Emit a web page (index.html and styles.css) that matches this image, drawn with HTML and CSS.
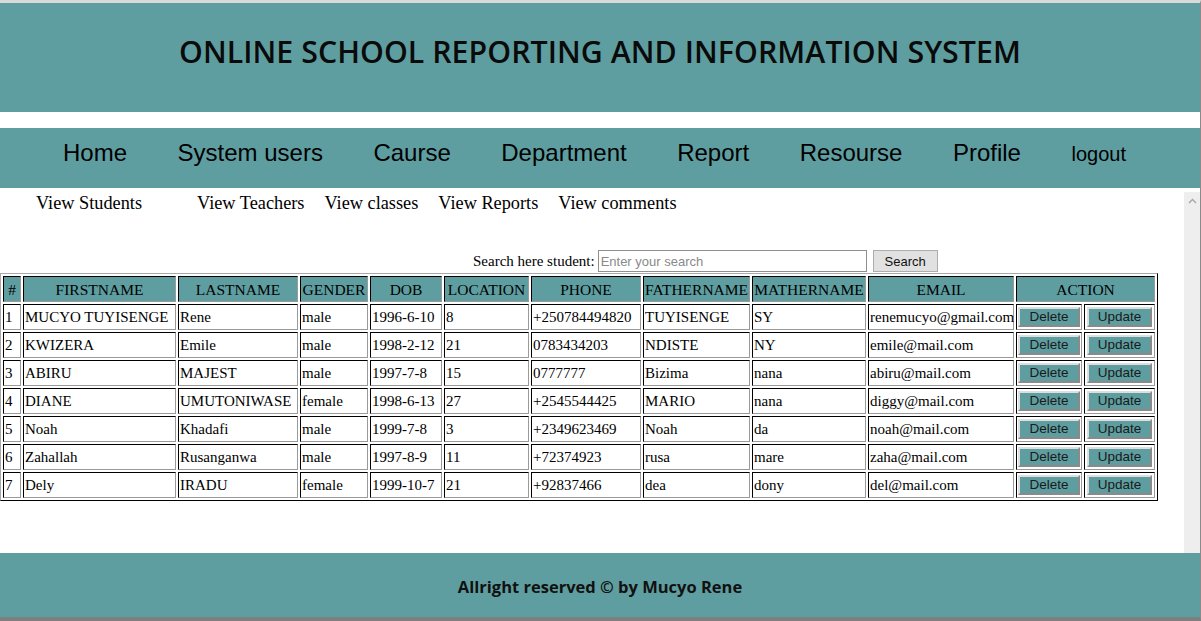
FILE: index.html
```html
<!DOCTYPE html>
<html lang="en">
<head>
<meta charset="utf-8">
<title>Online School Reporting and Information System</title>
<link rel="stylesheet" href="styles.css">
</head>
<body>
<div class="frame">
  <header class="masthead">
    <h1>ONLINE SCHOOL REPORTING AND INFORMATION SYSTEM</h1>
  </header>
  <nav class="topnav">
    <a href="#">Home</a>
    <a href="#">System users</a>
    <a href="#">Caurse</a>
    <a href="#">Department</a>
    <a href="#">Report</a>
    <a href="#">Resourse</a>
    <a href="#">Profile</a>
    <a href="#" class="logout">logout</a>
  </nav>
  <div class="content">
    <main class="main">
      <div class="subnav">
        <a href="#" class="first">View Students</a>
        <a href="#">View Teachers</a>
        <a href="#">View classes</a>
        <a href="#">View Reports</a>
        <a href="#">View comments</a>
      </div>
      <form class="search">
        <label for="q">Search here student:</label>
        <input id="q" type="text" placeholder="Enter your search">
        <button type="button">Search</button>
      </form>
      <table class="students">
        <colgroup>
          <col class="c-num"><col class="c-first"><col class="c-last"><col class="c-gender"><col class="c-dob"><col class="c-loc"><col class="c-phone"><col class="c-father"><col class="c-mother"><col class="c-email"><col class="c-del"><col class="c-upd">
        </colgroup>
        <thead>
          <tr><th>#</th><th>FIRSTNAME</th><th>LASTNAME</th><th>GENDER</th><th>DOB</th><th>LOCATION</th><th>PHONE</th><th>FATHERNAME</th><th>MATHERNAME</th><th>EMAIL</th><th colspan="2">ACTION</th></tr>
        </thead>
        <tbody>
          <tr><td>1</td><td>MUCYO TUYISENGE</td><td>Rene</td><td>male</td><td>1996-6-10</td><td>8</td><td>+250784494820</td><td>TUYISENGE</td><td>SY</td><td>renemucyo@gmail.com</td><td><button class="act">Delete</button></td><td><button class="act">Update</button></td></tr>
          <tr><td>2</td><td>KWIZERA</td><td>Emile</td><td>male</td><td>1998-2-12</td><td>21</td><td>0783434203</td><td>NDISTE</td><td>NY</td><td>emile@mail.com</td><td><button class="act">Delete</button></td><td><button class="act">Update</button></td></tr>
          <tr><td>3</td><td>ABIRU</td><td>MAJEST</td><td>male</td><td>1997-7-8</td><td>15</td><td>0777777</td><td>Bizima</td><td>nana</td><td>abiru@mail.com</td><td><button class="act">Delete</button></td><td><button class="act">Update</button></td></tr>
          <tr><td>4</td><td>DIANE</td><td>UMUTONIWASE</td><td>female</td><td>1998-6-13</td><td>27</td><td>+2545544425</td><td>MARIO</td><td>nana</td><td>diggy@mail.com</td><td><button class="act">Delete</button></td><td><button class="act">Update</button></td></tr>
          <tr><td>5</td><td>Noah</td><td>Khadafi</td><td>male</td><td>1999-7-8</td><td>3</td><td>+2349623469</td><td>Noah</td><td>da</td><td>noah@mail.com</td><td><button class="act">Delete</button></td><td><button class="act">Update</button></td></tr>
          <tr><td>6</td><td>Zahallah</td><td>Rusanganwa</td><td>male</td><td>1997-8-9</td><td>11</td><td>+72374923</td><td>rusa</td><td>mare</td><td>zaha@mail.com</td><td><button class="act">Delete</button></td><td><button class="act">Update</button></td></tr>
          <tr><td>7</td><td>Dely</td><td>IRADU</td><td>female</td><td>1999-10-7</td><td>21</td><td>+92837466</td><td>dea</td><td>dony</td><td>del@mail.com</td><td><button class="act">Delete</button></td><td><button class="act">Update</button></td></tr>
        </tbody>
      </table>
    </main>
    <div class="scrollbar" aria-hidden="true">
      <svg class="chev" width="9" height="6" viewBox="0 0 9 6"><path d="M1 5 L4.5 1.5 L8 5" fill="none" stroke="#a3a3a3" stroke-width="1.3"/></svg>
    </div>
  </div>
  <footer class="foot">Allright reserved © by Mucyo Rene</footer>
</div>
</body>
</html>
```

FILE: styles.css
```css
* { box-sizing: border-box; }
html, body { margin: 0; padding: 0; }
body {
  width: 1201px;
  height: 621px;
  overflow: hidden;
  background: #fff;
  color: #000;
  font-family: "Liberation Serif", "Times New Roman", serif;
}
a { color: inherit; text-decoration: none; }

.frame {
  height: 621px;
  display: flex;
  flex-direction: column;
  border-top: 3px solid #dadada;
  border-right: 1px solid #8a8a8a;
  border-bottom: 4px solid #7f7f7f;
}

.masthead {
  flex: none;
  height: 109px;
  background: #5f9ea0;
  display: flex;
  justify-content: center;
}
.masthead h1 {
  margin: 0;
  padding-top: 28px;
  font-family: "Open Sans", "Liberation Sans", sans-serif;
  font-weight: 600;
  font-size: 30.3px;
  line-height: 41px;
  letter-spacing: 0.05px;
  color: #0a0a0a;
  white-space: nowrap;
}

.topnav {
  flex: none;
  margin-top: 16px;
  height: 60px;
  background: #5f9ea0;
  display: flex;
  align-items: baseline;
  gap: 50.5px;
  padding: 11px 0 0 63px;
  font-family: "Liberation Sans", Arial, sans-serif;
  font-size: 24px;
  line-height: 28px;
}
.topnav .logout { font-size: 20px; }

.content {
  flex: none;
  height: 365px;
  display: flex;
}
.main { flex: 1; min-width: 0; }
.scrollbar {
  flex: none;
  width: 16px;
  margin-top: 4px;
  background: #eeeeee;
  display: flex;
  justify-content: center;
  padding-top: 6px;
}
.chev { display: block; }

.subnav {
  display: flex;
  gap: 20px;
  padding: 5px 0 0 36px;
  font-size: 18.3px;
  line-height: 21px;
}
.subnav .first { margin-right: 35px; }

.search {
  margin: 36px 0 0 0;
  padding-left: 473px;
  height: 22px;
  display: flex;
  align-items: center;
  font-size: 15px;
}
.search label { white-space: nowrap; }
.search input {
  margin: 0 0 0 3px;
  width: 269px;
  height: 22px;
  border: 1px solid #8f8f8f;
  padding: 0 2px;
  font-family: "Liberation Sans", Arial, sans-serif;
  font-size: 13px;
  color: #000;
}
.search input::placeholder { color: #8a8a8a; }
.search button {
  margin: 0 0 0 6px;
  width: 65px;
  height: 22px;
  background: #e1e1e1;
  border: 1px solid #adadad;
  font-family: "Liberation Sans", Arial, sans-serif;
  font-size: 13px;
  color: #111;
  padding: 0;
}

.students {
  margin: 1px 0 0 0;
  width: 1158px;
  table-layout: fixed;
  border-collapse: separate;
  border-spacing: 2px;
  border: 1px solid;
  border-color: #a9a9a9 #000 #000 #a9a9a9;
  font-size: 15px;
}
.c-num { width: 18px; }
.c-first { width: 153px; }
.c-last { width: 120px; }
.c-gender { width: 68px; }
.c-dob { width: 72px; }
.c-loc { width: 85px; }
.c-phone { width: 110px; }
.c-father { width: 107px; }
.c-mother { width: 114px; }
.c-email { width: 146px; }
.c-del { width: 66px; }
.c-upd { width: 71px; }

.students th,
.students td {
  height: 26px;
  padding: 1px;
  border: 1px solid;
  border-color: #000 #9a9a9a #9a9a9a #000;
  white-space: nowrap;
  line-height: 17px;
}
.students th {
  background: #5f9ea0;
  font-weight: normal;
  font-size: 15.5px;
  text-align: center;
}
.students td { text-align: left; }

.act {
  display: block;
  margin: 0 auto;
  height: 20px;
  padding: 0 9px;
  background: #5f9ea0;
  border: 2px solid;
  border-color: #dedede #8a8a8a #8a8a8a #dedede;
  font-family: "Liberation Sans", Arial, sans-serif;
  font-size: 13.5px;
  line-height: 14px;
  color: #1a1a1a;
}

.foot {
  flex: none;
  height: 64px;
  background: #5f9ea0;
  text-align: center;
  padding-top: 23px;
  font-family: "Open Sans", "Liberation Sans", sans-serif;
  font-weight: 700;
  font-size: 16.5px;
  line-height: 22px;
  color: #111;
}
```
